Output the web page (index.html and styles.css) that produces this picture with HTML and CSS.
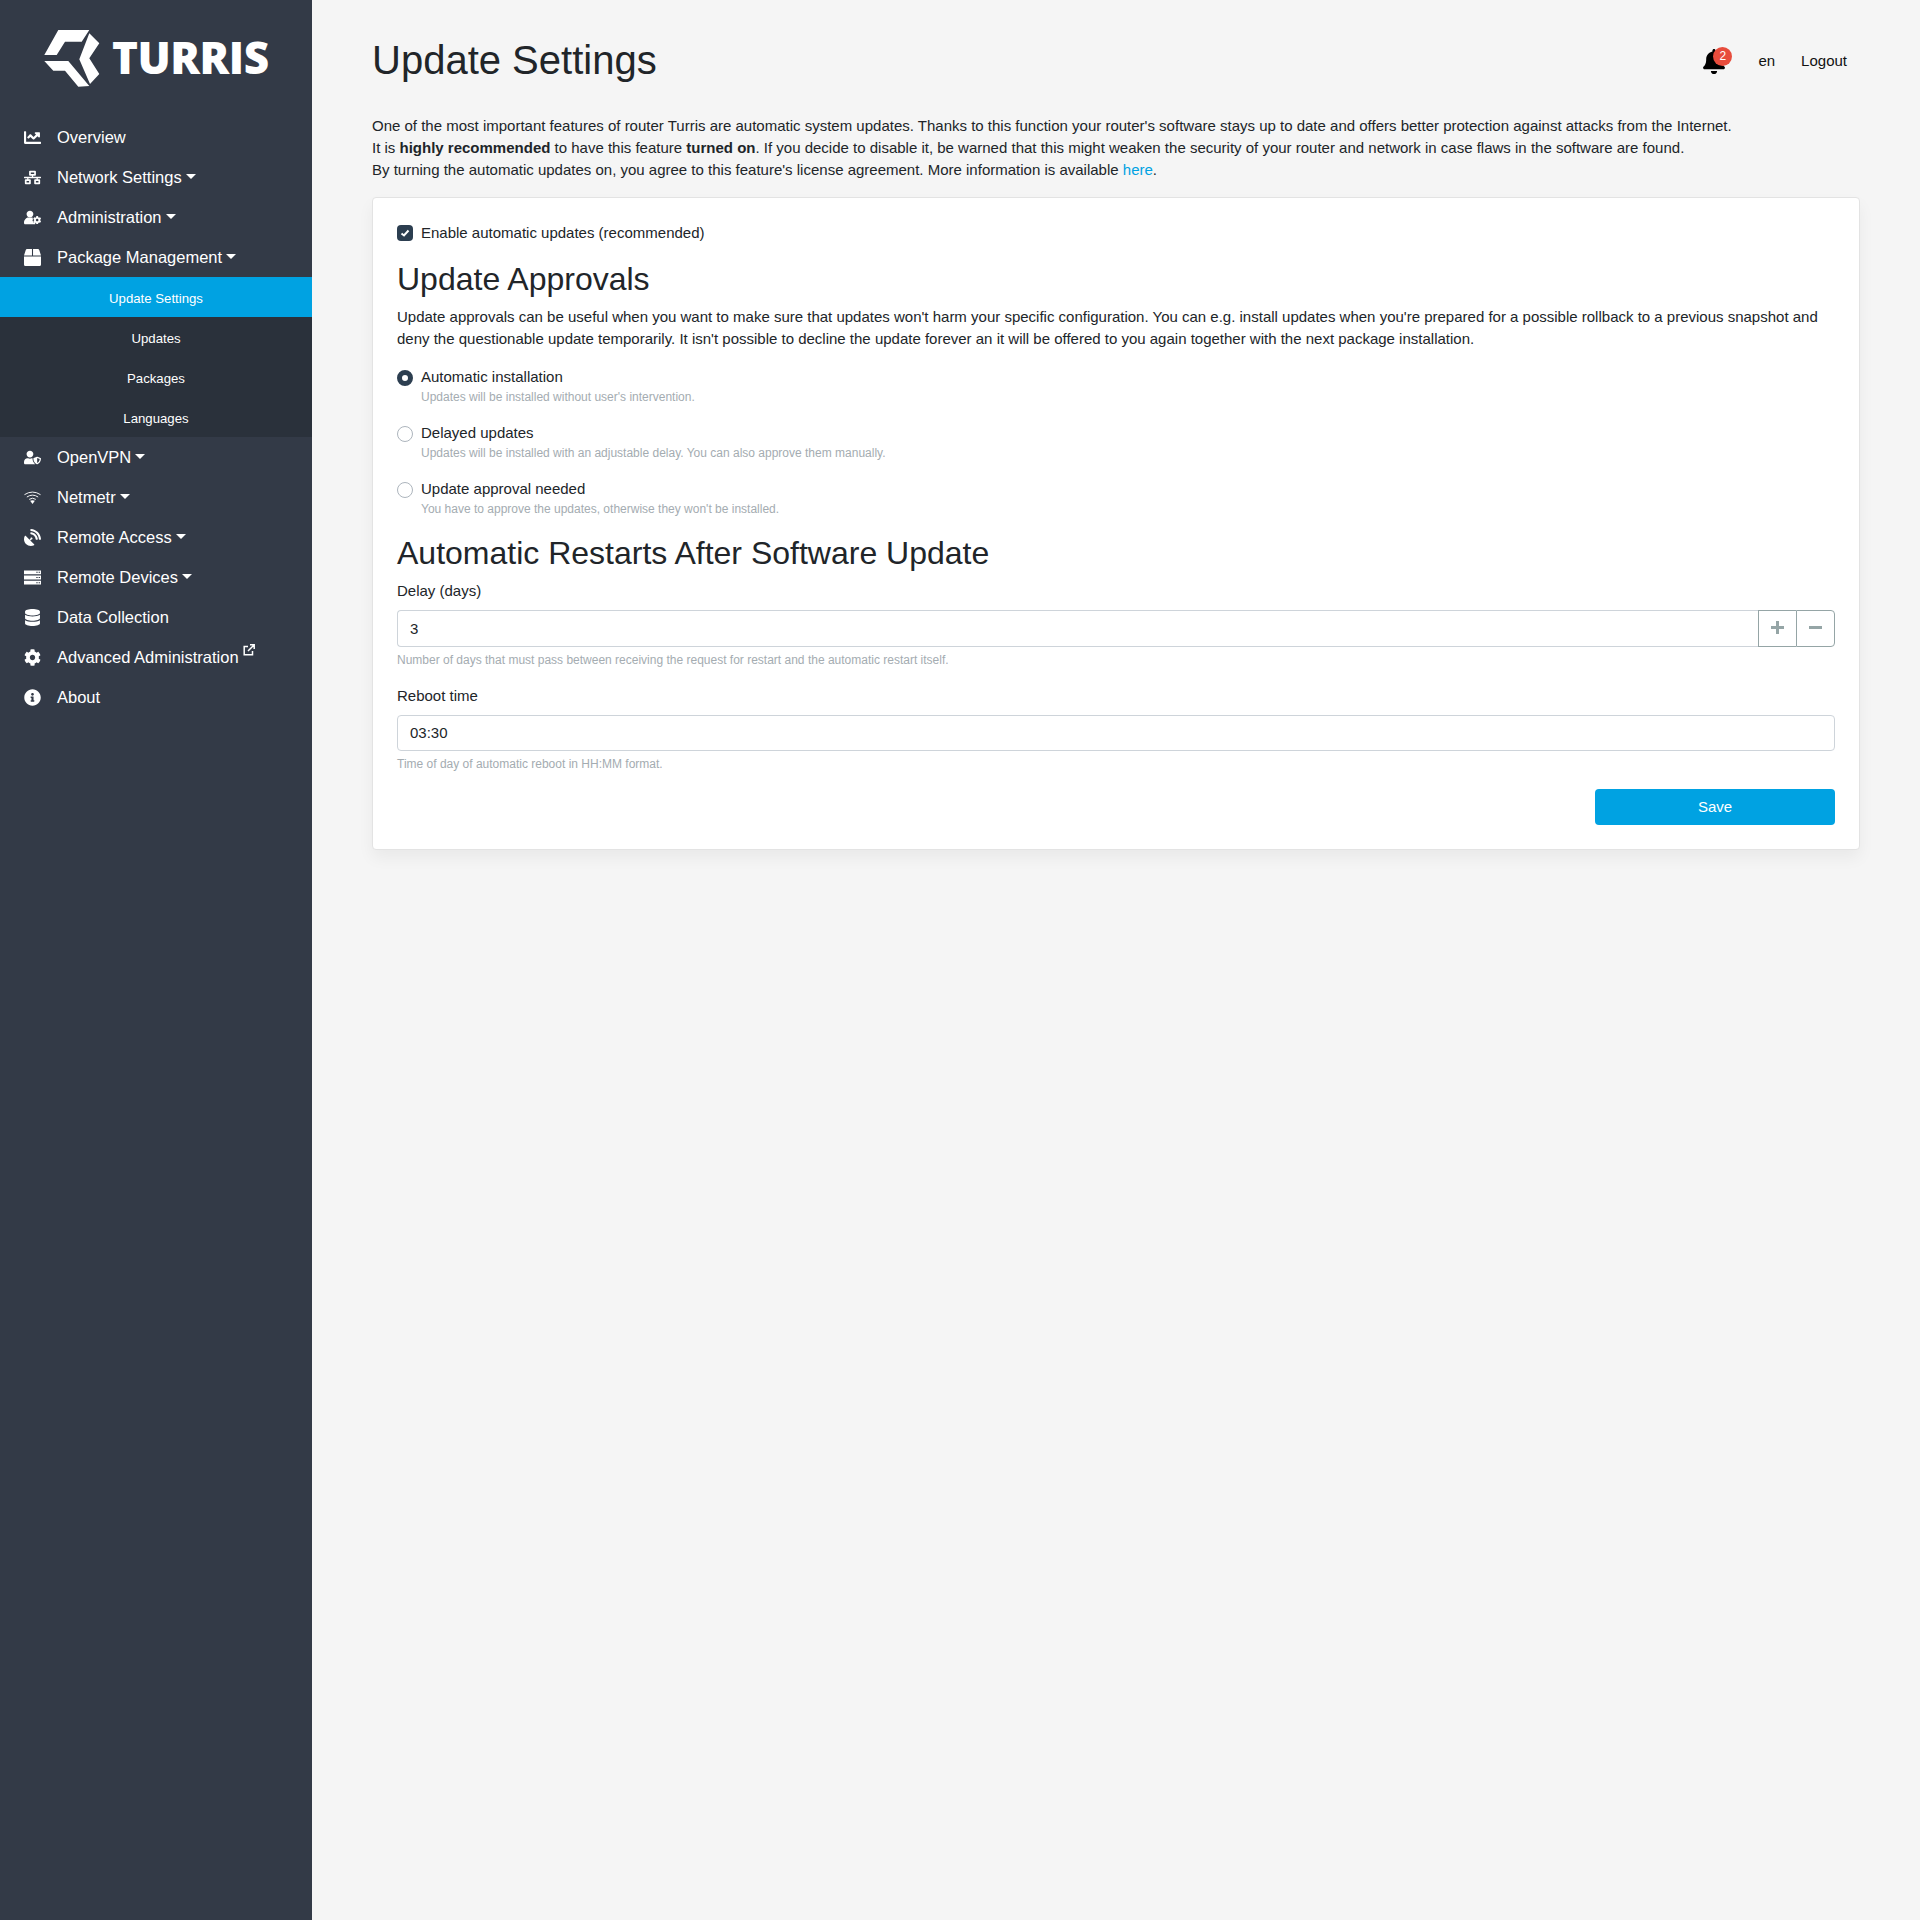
FILE: index.html
```html
<!DOCTYPE html>
<html lang="en">
<head>
    <meta charset="UTF-8">
    <title>Update Settings</title>
    <link rel="stylesheet" href="styles.css">
</head>
<body>
    <div class="layout">
        <nav class="sidebar">
            <div class="brand">
                <svg class="brand-mark" viewBox="0 0 56 58" width="56" height="58">
                    <path fill="#fff" d="M14.3 0H45.3L37.7 11.7H21L12.7 25H.3Z"/>
                    <path fill="#fff" d="M.3 31H24.3L45.3 56L34.3 56.7L21 40.7H9.3Z"/>
                    <path fill="#fff" d="M45.3 3.3L55.3 13.3L45.3 28.3L55.3 44L46 54L35.3 29.3Z"/>
                </svg>
                <span class="brand-name">TURRIS</span>
            </div>
            <ul class="menu">
                <li class="menu-item"><svg class="menu-icon" viewBox="0 0 512 512"><path fill="#fff" d="M496 384H64V80c0-8.84-7.16-16-16-16H16C7.16 64 0 71.16 0 80v336c0 17.67 14.33 32 32 32h464c8.84 0 16-7.16 16-16v-32c0-8.84-7.16-16-16-16zM464 96H345.94c-21.38 0-32.09 25.85-16.97 40.97l32.4 32.4L288 242.75l-73.37-73.37c-12.5-12.5-32.76-12.5-45.25 0l-68.69 68.69c-6.25 6.25-6.25 16.38 0 22.63l22.62 22.62c6.25 6.25 16.38 6.25 22.63 0L192 237.25l73.37 73.37c12.5 12.5 32.76 12.5 45.25 0l96-96 32.4 32.4c15.12 15.12 40.97 4.41 40.97-16.97V112c.01-8.84-7.15-16-16-16z"/></svg><span>Overview</span></li>
                <li class="menu-item"><svg class="menu-icon" viewBox="0 0 640 512"><path fill="#fff" d="M640 264v-16c0-8.84-7.16-16-16-16H344v-40h72c17.67 0 32-14.33 32-32V32c0-17.67-14.33-32-32-32H224c-17.67 0-32 14.33-32 32v128c0 17.67 14.33 32 32 32h72v40H16c-8.84 0-16 7.16-16 16v16c0 8.84 7.16 16 16 16h104v40H64c-17.67 0-32 14.33-32 32v128c0 17.67 14.33 32 32 32h160c17.67 0 32-14.33 32-32V352c0-17.67-14.33-32-32-32h-56v-40h304v40h-56c-17.67 0-32 14.33-32 32v128c0 17.67 14.33 32 32 32h160c17.67 0 32-14.33 32-32V352c0-17.67-14.33-32-32-32h-56v-40h104c8.84 0 16-7.16 16-16zM256 128V64h128v64H256zm-64 320H96v-64h96v64zm352 0h-96v-64h96v64z"/></svg><span class="caret-label">Network Settings</span></li>
                <li class="menu-item"><svg class="menu-icon" viewBox="0 0 640 512"><path fill="#fff" d="M610.5 373.3c2.6-14.1 2.6-28.5 0-42.6l25.8-14.9c3-1.7 4.3-5.2 3.3-8.5-6.7-21.6-18.2-41.2-33.2-57.4-2.3-2.5-6-3.1-9-1.4l-25.8 14.9c-10.9-9.3-23.4-16.5-36.9-21.3v-29.8c0-3.4-2.4-6.4-5.7-7.1-22.3-5-45-4.8-66.2 0-3.3.7-5.7 3.7-5.7 7.1v29.8c-13.5 4.8-26 12-36.9 21.3l-25.8-14.9c-2.9-1.7-6.7-1.1-9 1.4-15 16.2-26.5 35.8-33.2 57.4-1 3.3.4 6.8 3.3 8.5l25.8 14.9c-2.6 14.1-2.6 28.5 0 42.6l-25.8 14.9c-3 1.7-4.3 5.2-3.3 8.5 6.7 21.6 18.2 41.1 33.2 57.4 2.3 2.5 6 3.1 9 1.4l25.8-14.9c10.9 9.3 23.4 16.5 36.9 21.3v29.8c0 3.4 2.4 6.4 5.7 7.1 22.3 5 45 4.8 66.2 0 3.3-.7 5.7-3.7 5.7-7.1v-29.8c13.5-4.8 26-12 36.9-21.3l25.8 14.9c2.9 1.7 6.7 1.1 9-1.4 15-16.2 26.5-35.8 33.2-57.4 1-3.3-.4-6.8-3.3-8.5l-25.8-14.9zM496 400.5c-26.8 0-48.5-21.8-48.5-48.5s21.8-48.5 48.5-48.5 48.5 21.8 48.5 48.5-21.7 48.5-48.5 48.5zM224 256c70.7 0 128-57.3 128-128S294.7 0 224 0 96 57.3 96 128s57.3 128 128 128zm201.7 190.3c-2.3-1.2-4.6-2.6-6.8-3.9l-7.9 4.6c-6 3.4-12.8 5.3-19.6 5.3-10.9 0-21.4-4.6-28.9-12.6-18.3-19.8-32.3-43.9-40.2-69.6-5.5-17.7 1.9-36.4 17.9-45.7l7.9-4.6c-.1-2.6-.1-5.2 0-7.8l-7.9-4.6c-16-9.2-23.4-28-17.9-45.7.9-2.9 2.2-5.8 3.2-8.7-3.8-.3-7.5-1.2-11.4-1.2h-16.7c-22.2 10.2-46.9 16-72.9 16s-50.6-5.8-72.9-16h-16.7C60.2 288 0 348.2 0 422.4V464c0 26.5 21.5 48 48 48h352c10.1 0 19.5-3.2 27.2-8.5-1.2-3.8-2-7.7-2-11.8v-45.4z"/></svg><span class="caret-label">Administration</span></li>
                <li class="menu-item"><svg class="menu-icon" viewBox="0 0 512 512"><path fill="#fff" d="M509.5 184.6L458.9 32.8C452.4 13.2 434.1 0 413.4 0H272v192h238.7c-.4-2.5-.4-5-1.2-7.4zM240 0H98.6c-20.7 0-39 13.2-45.5 32.8L2.5 184.6c-.8 2.4-.8 4.9-1.2 7.4H240V0zM0 224v240c0 26.5 21.5 48 48 48h416c26.5 0 48-21.5 48-48V224H0z"/></svg><span class="caret-label">Package Management</span></li>
                <li class="submenu">
                    <a class="submenu-item active">Update Settings</a>
                    <a class="submenu-item">Updates</a>
                    <a class="submenu-item">Packages</a>
                    <a class="submenu-item">Languages</a>
                </li>
                <li class="menu-item"><svg class="menu-icon" viewBox="0 0 640 512"><path fill="#fff" d="M622.3 271.1l-115.2-45c-4.1-1.6-12.6-3.7-22.2 0l-115.2 45c-10.7 4.2-17.7 14-17.7 24.9 0 111.6 68.7 188.8 132.9 213.9 9.6 3.7 18 1.6 22.2 0C558.4 489.9 640 420.5 640 296c0-10.9-7-20.7-17.7-24.9zM496 462.4V273.3l95.5 37.3c-5.6 87.1-60.9 135.4-95.5 151.8zM224 256c70.7 0 128-57.3 128-128S294.7 0 224 0 96 57.3 96 128s57.3 128 128 128zm96 40c0-2.5.8-4.7 1.1-7.2-2.5-.1-4.9-.8-7.5-.8h-16.7c-22.2 10.2-46.9 16-72.9 16s-50.6-5.8-72.9-16h-16.7C60.2 288 0 348.2 0 422.4V464c0 26.5 21.5 48 48 48h352c6.8 0 13.3-1.5 19.2-4-54-42.9-99.2-116.7-99.2-212z"/></svg><span class="caret-label">OpenVPN</span></li>
                <li class="menu-item"><svg class="menu-icon" viewBox="0 0 18 14"><path fill="none" stroke="#fff" stroke-width="1" d="M.5 4Q9-1.500 17.500 4M3 6.500Q9 2.500 15 6.500M5.500 9Q9 6.500 12.500 9"/><path fill="#fff" d="M6.500 10.500Q9 9.500 11.500 10.500L9 14Z"/></svg><span class="caret-label">Netmetr</span></li>
                <li class="menu-item"><svg class="menu-icon" viewBox="0 0 512 512"><path fill="#fff" d="M188.8 345.9l27.4-27.4c2.6.7 5 1.6 7.8 1.6 17.7 0 32-14.3 32-32s-14.3-32-32-32-32 14.3-32 32c0 2.8.9 5.2 1.6 7.8l-27.4 27.4L49.4 206.5c-7.3-7.3-20.1-6.1-25 3-41.8 77.8-29.9 176.7 35.7 242.3 65.6 65.6 164.6 77.5 242.3 35.7 9.2-4.9 10.4-17.7 3-25L188.8 345.9zM209 0c-9.2-.5-17 6.8-17 16v31.6c0 8.5 6.6 15.5 15 15.9 129.4 7 233.1 111.8 240.9 241.5.5 8.4 7.5 15 15.9 15h32.1c9.2 0 16.5-7.8 16-17C503.4 139.8 372.2 8.6 209 0zm.3 96c-9.3-.7-17.3 6.7-17.3 16.1v32.1c0 8.4 6.5 15.3 14.8 15.9 76.8 6.3 138 68.2 144.9 145.2.8 8.3 7.6 14.7 15.9 14.7h32.2c9.3 0 16.8-8 16.1-17.3-8.4-110.1-96.5-198.2-206.6-206.8z"/></svg><span class="caret-label">Remote Access</span></li>
                <li class="menu-item"><svg class="menu-icon" viewBox="0 0 18 15"><path fill="#fff" fill-rule="evenodd" d="M0 0H18V4H0ZM0 5.500H18V9.500H0ZM0 11H18V15H0ZM13 1.500V2.500H14.500V1.500ZM15.500 1.500V2.500H17V1.500ZM13 7V8H14.500V7ZM15.500 7V8H17V7ZM13 12.500V13.500H14.500V12.500ZM15.500 12.500V13.500H17V12.500Z"/></svg><span class="caret-label">Remote Devices</span></li>
                <li class="menu-item"><svg class="menu-icon" viewBox="0 0 448 512"><path fill="#fff" d="M448 73.143v45.714C448 159.143 347.667 192 224 192S0 159.143 0 118.857V73.143C0 32.857 100.333 0 224 0s224 32.857 224 73.143zM448 176v102.857C448 319.143 347.667 352 224 352S0 319.143 0 278.857V176c48.125 33.143 136.208 48.572 224 48.572S399.874 209.143 448 176zm0 160v102.857C448 479.143 347.667 512 224 512S0 479.143 0 438.857V336c48.125 33.143 136.208 48.572 224 48.572S399.874 369.143 448 336z"/></svg><span>Data Collection</span></li>
                <li class="menu-item"><svg class="menu-icon" viewBox="0 0 512 512"><path fill="#fff" d="M487.4 315.7l-42.6-24.6c4.3-23.2 4.3-47 0-70.2l42.6-24.6c4.9-2.8 7.1-8.6 5.5-14-11.1-35.6-30-67.8-54.7-94.6-3.8-4.1-10-5.1-14.8-2.3L380.8 110c-17.9-15.4-38.5-27.3-60.8-35.1V25.8c0-5.6-3.9-10.5-9.4-11.7-36.7-8.2-74.3-7.8-109.2 0-5.5 1.2-9.4 6.1-9.4 11.7V75c-22.2 7.9-42.8 19.8-60.8 35.1L88.7 85.5c-4.9-2.8-11-1.9-14.8 2.3-24.7 26.7-43.6 58.9-54.7 94.6-1.7 5.4.6 11.2 5.5 14L67.3 221c-4.3 23.2-4.3 47 0 70.2l-42.6 24.6c-4.9 2.8-7.1 8.6-5.5 14 11.1 35.6 30 67.8 54.7 94.6 3.8 4.1 10 5.1 14.8 2.3l42.6-24.6c17.9 15.4 38.5 27.3 60.8 35.1v49.2c0 5.6 3.9 10.5 9.4 11.7 36.7 8.2 74.3 7.8 109.2 0 5.5-1.2 9.4-6.1 9.4-11.7v-49.2c22.2-7.9 42.8-19.8 60.8-35.1l42.6 24.6c4.9 2.8 11 1.9 14.8-2.3 24.7-26.7 43.6-58.9 54.7-94.6 1.5-5.5-.7-11.3-5.6-14.1zM256 336c-44.1 0-80-35.9-80-80s35.9-80 80-80 80 35.9 80 80-35.9 80-80 80z"/></svg><span>Advanced Administration</span><svg class="external-icon" viewBox="0 0 12 12"><path fill="none" stroke="#fff" stroke-width="1.500" d="M9.500 7V10.800H1.200V2.500H5M5 7L11 1M7 .8H11.200V5"/></svg></li>
                <li class="menu-item"><svg class="menu-icon" viewBox="0 0 512 512"><path fill="#fff" d="M256 8C119.043 8 8 119.083 8 256c0 136.997 111.043 248 248 248s248-111.003 248-248C504 119.083 392.957 8 256 8zm0 110c23.196 0 42 18.804 42 42s-18.804 42-42 42-42-18.804-42-42 18.804-42 42-42zm56 254c0 6.627-5.373 12-12 12h-88c-6.627 0-12-5.373-12-12v-24c0-6.627 5.373-12 12-12h12v-64h-12c-6.627 0-12-5.373-12-12v-24c0-6.627 5.373-12 12-12h64c6.627 0 12 5.373 12 12v100h12c6.627 0 12 5.373 12 12v24z"/></svg><span>About</span></li>
            </ul>
        </nav>
        <main class="content">
            <header class="topbar">
                <h1 class="page-title">Update Settings</h1>
                <div class="topbar-links">
                    <div class="bell">
                        <svg viewBox="0 0 448 512" width="22" height="25"><path d="M224 512c35.32 0 63.97-28.65 63.97-64H160.03c0 35.35 28.65 64 63.97 64zm215.39-149.71c-19.32-20.76-55.47-51.99-55.47-154.29 0-77.7-54.48-139.9-127.94-155.16V32c0-17.67-14.32-32-31.98-32s-31.98 14.33-31.98 32v20.84C118.56 68.1 64.08 130.3 64.08 208c0 102.3-36.15 133.53-55.47 154.29-6 6.45-8.66 14.16-8.61 21.71.11 16.4 12.98 32 32.1 32h383.8c19.12 0 32-15.6 32.1-32 .05-7.55-2.61-15.27-8.61-21.71z"/></svg>
                        <span class="bell-badge">2</span>
                    </div>
                    <a class="top-link">en</a>
                    <a class="top-link">Logout</a>
                </div>
            </header>
            <p class="intro">One of the most important features of router Turris are automatic system updates. Thanks to this function your router's software stays up to date and offers better protection against attacks from the Internet.<br>It is <b>highly recommended</b> to have this feature <b>turned on</b>. If you decide to disable it, be warned that this might weaken the security of your router and network in case flaws in the software are found.<br>By turning the automatic updates on, you agree to this feature's license agreement. More information is available <a class="link">here</a>.</p>
            <section class="card">
                <div class="check-row">
                    <span class="check-box"><svg viewBox="0 0 16 16" width="16" height="16"><path fill="none" stroke="#fff" stroke-width="2" d="M4.500 8.500L7 10.500L11.500 5.500"/></svg></span>
                    <label>Enable automatic updates (recommended)</label>
                </div>
                <h2 class="section-title">Update Approvals</h2>
                <p class="section-text">Update approvals can be useful when you want to make sure that updates won't harm your specific configuration. You can e.g. install updates when you're prepared for a possible rollback to a previous snapshot and deny the questionable update temporarily. It isn't possible to decline the update forever an it will be offered to you again together with the next package installation.</p>
                <div class="radio-row">
                    <span class="radio checked"></span>
                    <div><label>Automatic installation</label><small class="hint">Updates will be installed without user's intervention.</small></div>
                </div>
                <div class="radio-row">
                    <span class="radio"></span>
                    <div><label>Delayed updates</label><small class="hint">Updates will be installed with an adjustable delay. You can also approve them manually.</small></div>
                </div>
                <div class="radio-row">
                    <span class="radio"></span>
                    <div><label>Update approval needed</label><small class="hint">You have to approve the updates, otherwise they won't be installed.</small></div>
                </div>
                <h2 class="section-title">Automatic Restarts After Software Update</h2>
                <div class="field">
                    <label class="field-label">Delay (days)</label>
                    <div class="input-group">
                        <div class="input grouped">3</div>
                        <button class="step-btn" type="button"><svg viewBox="0 0 13 13" width="13" height="13"><path fill="#95a5a6" d="M5 0H8V5H13V8H8V13H5V8H0V5H5Z"/></svg></button>
                        <button class="step-btn last" type="button"><svg viewBox="0 0 13 13" width="13" height="13"><path fill="#95a5a6" d="M0 5H13V8H0Z"/></svg></button>
                    </div>
                    <small class="hint">Number of days that must pass between receiving the request for restart and the automatic restart itself.</small>
                </div>
                <div class="field">
                    <label class="field-label">Reboot time</label>
                    <div class="input">03:30</div>
                    <small class="hint">Time of day of automatic reboot in HH:MM format.</small>
                </div>
                <div class="actions"><button class="save-btn" type="button">Save</button></div>
            </section>
        </main>
    </div>
</body>
</html>
```
FILE: styles.css
```css
* {
    box-sizing: border-box;
}

body {
    margin: 0;
    font-family: "Liberation Sans", Arial, sans-serif;
    font-size: 15px;
    line-height: 22.5px;
    color: #212529;
    background-color: #f5f5f5;
}

.layout {
    display: flex;
    min-height: 1920px;
}

/* sidebar */
.sidebar {
    width: 312px;
    flex-shrink: 0;
    background-color: #333a47;
    color: #fff;
}

.brand {
    display: flex;
    align-items: center;
    height: 117px;
    padding-left: 44px;
    gap: 12px;
}

.brand-name {
    padding-bottom: 3px;
    font-family: "Open Sans", sans-serif;
    font-weight: 800;
    font-size: 44px;
    letter-spacing: -0.5px;
    line-height: 1;
}

.menu {
    list-style: none;
    margin: 0;
    padding: 0;
}

.menu-item {
    display: flex;
    align-items: center;
    height: 40px;
    padding-left: 24px;
    font-size: 16.5px;
}

.menu-icon {
    width: 17px;
    height: 17px;
    margin-right: 16px;
    flex-shrink: 0;
}

.caret-label::after {
    content: "";
    display: inline-block;
    margin-left: 4px;
    vertical-align: 4px;
    border-top: 5px solid #fff;
    border-left: 5px solid transparent;
    border-right: 5px solid transparent;
}

.external-icon {
    width: 12px;
    height: 12px;
    margin-left: 4px;
    margin-bottom: 15px;
}

.submenu {
    background-color: #2a313b;
}

.submenu-item {
    display: block;
    height: 40px;
    line-height: 43px;
    text-align: center;
    font-size: 13.2px;
}

.submenu-item.active {
    background-color: #00a2e2;
}

/* main area */
.content {
    flex: 1;
    padding: 0 60px;
    min-width: 0;
}

.topbar {
    display: flex;
    align-items: flex-start;
    justify-content: space-between;
    height: 115px;
    padding-top: 36px;
}

.page-title {
    margin: 0;
    font-size: 40px;
    font-weight: 400;
    line-height: 1.2;
}

.topbar-links {
    display: flex;
    align-items: center;
    height: 48px;
    padding: 3px 13px 0 0;
    color: #111;
}

.top-link {
    margin-left: 26px;
}

.bell {
    position: relative;
    height: 25px;
    margin-right: 7px;
}

.bell-badge {
    position: absolute;
    top: -2px;
    left: 10px;
    width: 19px;
    height: 19px;
    border-radius: 50%;
    background-color: #e74c3c;
    color: #fff;
    font-size: 12px;
    line-height: 19px;
    text-align: center;
}

.intro {
    margin: 0 0 15.5px;
    line-height: 22px;
}

.link {
    color: #00a2e2;
}

.card {
    background-color: #fff;
    border: 1px solid #e3e3e3;
    border-radius: 4px;
    box-shadow: 0 8px 16px rgba(0, 0, 0, 0.05);
    padding: 24px;
}

.check-row {
    display: flex;
    align-items: center;
    gap: 8px;
    margin-bottom: 16px;
}

.check-box {
    width: 16px;
    height: 16px;
    border-radius: 4px;
    background-color: #2c3e50;
}

.check-box svg {
    display: block;
}

.section-title {
    margin: 0 0 7.5px;
    font-size: 32px;
    font-weight: 400;
    line-height: 1.2;
}

.section-text {
    margin: 0 0 15px;
}

.radio-row {
    display: flex;
    gap: 8px;
    height: 56px;
}

.radio {
    width: 16px;
    height: 16px;
    margin-top: 4px;
    border-radius: 50%;
    border: 1px solid #adb5bd;
    flex-shrink: 0;
}

.radio.checked {
    border: 5px solid #2c3e50;
}

label {
    display: block;
}

.hint {
    display: block;
    font-size: 12px;
    line-height: 18px;
    color: #a4acb1;
}

.field {
    margin-bottom: 16px;
}

.field + .field {
    margin-bottom: 16px;
}

.field-label {
    margin-bottom: 8px;
}

.field + .field .field-label {
    margin-bottom: 7px;
}

.input {
    height: 36px;
    line-height: 34px;
    padding: 0 12px;
    border: 1px solid #ced4da;
    border-radius: 4px;
    margin-bottom: 4px;
}

.input-group {
    display: flex;
}

.input.grouped {
    flex: 1;
    height: 37px;
    line-height: 35px;
    border-radius: 4px 0 0 4px;
    border-right: 0;
}

.step-btn {
    display: flex;
    align-items: center;
    justify-content: center;
    width: 38px;
    height: 37px;
    padding: 0 0 2px;
    border: 1px solid #95a5a6;
    border-right: 0;
    background-color: #fff;
}

.step-btn.last {
    width: 39px;
    border-right: 1px solid #95a5a6;
    border-radius: 0 4px 4px 0;
}

.actions {
    display: flex;
    justify-content: flex-end;
}

.save-btn {
    width: 240px;
    height: 36px;
    border: 0;
    border-radius: 4px;
    background-color: #00a2e2;
    color: #fff;
    font-family: inherit;
    font-size: 15px;
}
```
